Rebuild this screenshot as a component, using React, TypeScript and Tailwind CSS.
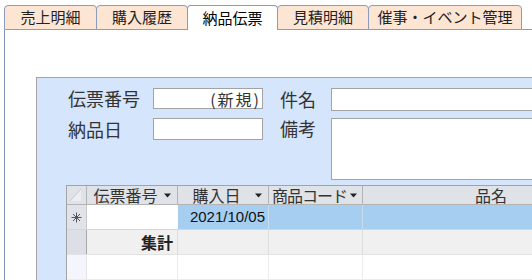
import React from "react";

const font = { fontFamily: '"Noto Sans CJK JP", "Noto Sans", sans-serif' };

function Arrow() {
  return (
    <svg width="7" height="5" viewBox="0 0 7 5" className="shrink-0">
      <polygon points="0,0.5 7,0.5 3.5,4.5" fill="#222" />
    </svg>
  );
}

function Star() {
  return (
    <svg width="11" height="11" viewBox="0 0 11 11">
      <g stroke="#555" strokeWidth="1">
        <line x1="5.5" y1="0.5" x2="5.5" y2="10.5" />
        <line x1="0.5" y1="5.5" x2="10.5" y2="5.5" />
        <line x1="2" y1="2" x2="9" y2="9" />
        <line x1="9" y1="2" x2="2" y2="9" />
      </g>
    </svg>
  );
}

function Corner() {
  return (
    <svg width="19" height="18" viewBox="0 0 19 18">
      <polygon points="3,15 14,3 14,15" fill="#eceef2" />
      <line x1="3" y1="15" x2="14" y2="3" stroke="#c4c8ce" strokeWidth="1" />
    </svg>
  );
}

const tabs = [
  { label: "売上明細", w: "w-[93px]", active: false },
  { label: "購入履歴", w: "w-[92px]", active: false },
  { label: "納品伝票", w: "w-[91px]", active: true },
  { label: "見積明細", w: "w-[92px]", active: false },
  { label: "催事・イベント管理", w: "w-[154px]", active: false },
];

export default function App() {
  return (
    <div className="w-[532px] h-[280px] bg-white overflow-hidden text-[#222]" style={font}>
      {/* Tab bar */}
      <div className="flex items-end h-[30px] pl-[4px]">
        {tabs.map((t) => (
          <div
            key={t.label}
            className={
              t.active
                ? `${t.w} shrink-0 h-[25px] -ml-px first:ml-0 flex items-center justify-center border border-b-0 border-[#8b9cb8] rounded-t-[4px] bg-white text-[15px] text-black`
                : `${t.w} shrink-0 h-[25px] -ml-px first:ml-0 flex items-center justify-center border border-[#8b9cb8] rounded-t-[4px] bg-[#fde5d3] text-[15px]`
            }
          >
            {t.label}
          </div>
        ))}
        <div className="flex-1 h-[25px] border-b border-[#8b9cb8]" />
      </div>

      {/* Body */}
      <div className="ml-[4px] h-[250px] border-l border-[#8093b4] pl-[31px] pt-[47px]">
        <div className="w-[600px] h-[300px] border border-r-0 border-[#a3a3a3] bg-[#d5e5fb] pt-[10px]">
          {/* Row 1 */}
          <div className="flex items-start">
            <div className="ml-[31px] w-[85px] shrink-0 h-[21px] flex items-center text-[18px] text-[#333]">伝票番号</div>
            <div className="w-[110px] shrink-0 h-[21px] border border-[#a3a3a3] bg-white flex items-center justify-end pr-[1px] text-[16px] tracking-[2px] text-[#333]">
              (新規)
            </div>
            <div className="ml-[17px] w-[51px] shrink-0 h-[23px] flex items-center text-[18px] text-[#333]">件名</div>
            <div className="w-[260px] shrink-0 h-[23px] border border-r-0 border-[#a3a3a3] bg-white" />
          </div>
          {/* Row 2 */}
          <div className="flex items-start mt-[7px]">
            <div className="ml-[31px] w-[85px] shrink-0 h-[22px] flex items-center text-[18px] text-[#333]">納品日</div>
            <div className="w-[110px] shrink-0 h-[22px] border border-[#a3a3a3] bg-white" />
            <div className="ml-[17px] w-[51px] shrink-0 h-[20px] flex items-center text-[18px] text-[#333]">備考</div>
            <div className="w-[260px] shrink-0 h-[62px] border border-r-0 border-[#a3a3a3] bg-white" />
          </div>

          {/* Datasheet */}
          <div className="ml-[29px] mt-[5px] w-[560px] border-l border-t border-[#a3a3a3] bg-white">
            {/* header */}
            <div className="flex h-[19px] bg-[#dfe2e7] border-b border-[#b4b4b4] text-[16px] text-[#333] whitespace-nowrap">
              <div className="w-[20px] shrink-0 border-r border-[#b4b4b4] flex items-start">
                <Corner />
              </div>
              <div className="w-[91px] shrink-0 border-r border-[#b4b4b4] flex items-center pr-[6px]">
                <span className="flex-1 text-center leading-none">伝票番号</span>
                <Arrow />
              </div>
              <div className="w-[91px] shrink-0 border-r border-[#b4b4b4] flex items-center pr-[6px]">
                <span className="flex-1 text-center leading-none">購入日</span>
                <Arrow />
              </div>
              <div className="w-[94px] shrink-0 border-r border-[#b4b4b4] flex items-center pr-[5px]">
                <span className="flex-1 text-center leading-none tracking-[-1px]">商品コード</span>
                <Arrow />
              </div>
              <div className="w-[256px] shrink-0 flex items-center justify-center leading-none">品名</div>
            </div>
            {/* new record row */}
            <div className="flex h-[25px] border-b border-[#d6d6d6]">
              <div className="w-[20px] shrink-0 bg-[#e0e3e9] border-r border-[#c6c8cc] flex items-center justify-center">
                <Star />
              </div>
              <div className="w-[91px] shrink-0 bg-white" />
              <div
                className="w-[91px] shrink-0 bg-[#a5cef0] border-r border-[#c8dcee] flex items-center justify-end pr-[3px] text-[15px] text-[#111]"
                style={{ fontFamily: '"Liberation Sans", "Noto Sans CJK JP", sans-serif' }}
              >
                2021/10/05
              </div>
              <div className="w-[94px] shrink-0 bg-[#a5cef0] border-r border-[#c8dcee]" />
              <div className="w-[256px] shrink-0 bg-[#a5cef0]" />
            </div>
            {/* total row */}
            <div className="flex h-[25px] border-b border-[#e2e2e2] bg-[#f0f0f0]">
              <div className="w-[20px] shrink-0 bg-[#dcdfe5] border-r border-[#a8a8a8]" />
              <div className="w-[91px] shrink-0 border-r border-[#dedede] flex items-center justify-end pr-[4px] text-[16px] font-bold text-[#222]">
                集計
              </div>
              <div className="w-[91px] shrink-0 border-r border-[#dedede]" />
              <div className="w-[94px] shrink-0 border-r border-[#dedede]" />
              <div className="w-[256px] shrink-0" />
            </div>
            {/* empty rows */}
            <div className="flex h-[25px] border-b border-[#ececec] bg-white">
              <div className="w-[20px] shrink-0 bg-[#f4f5fd] border-r border-[#e4e4e4]" />
              <div className="w-[91px] shrink-0 border-r border-[#ececec]" />
              <div className="w-[91px] shrink-0 border-r border-[#ececec]" />
              <div className="w-[94px] shrink-0 border-r border-[#ececec]" />
              <div className="w-[256px] shrink-0" />
            </div>
            <div className="flex h-[25px] bg-white">
              <div className="w-[20px] shrink-0 bg-[#f4f5fd] border-r border-[#e4e4e4]" />
              <div className="w-[91px] shrink-0 border-r border-[#ececec]" />
              <div className="w-[91px] shrink-0 border-r border-[#ececec]" />
              <div className="w-[94px] shrink-0 border-r border-[#ececec]" />
              <div className="w-[256px] shrink-0" />
            </div>
          </div>
        </div>
      </div>
    </div>
  );
}
